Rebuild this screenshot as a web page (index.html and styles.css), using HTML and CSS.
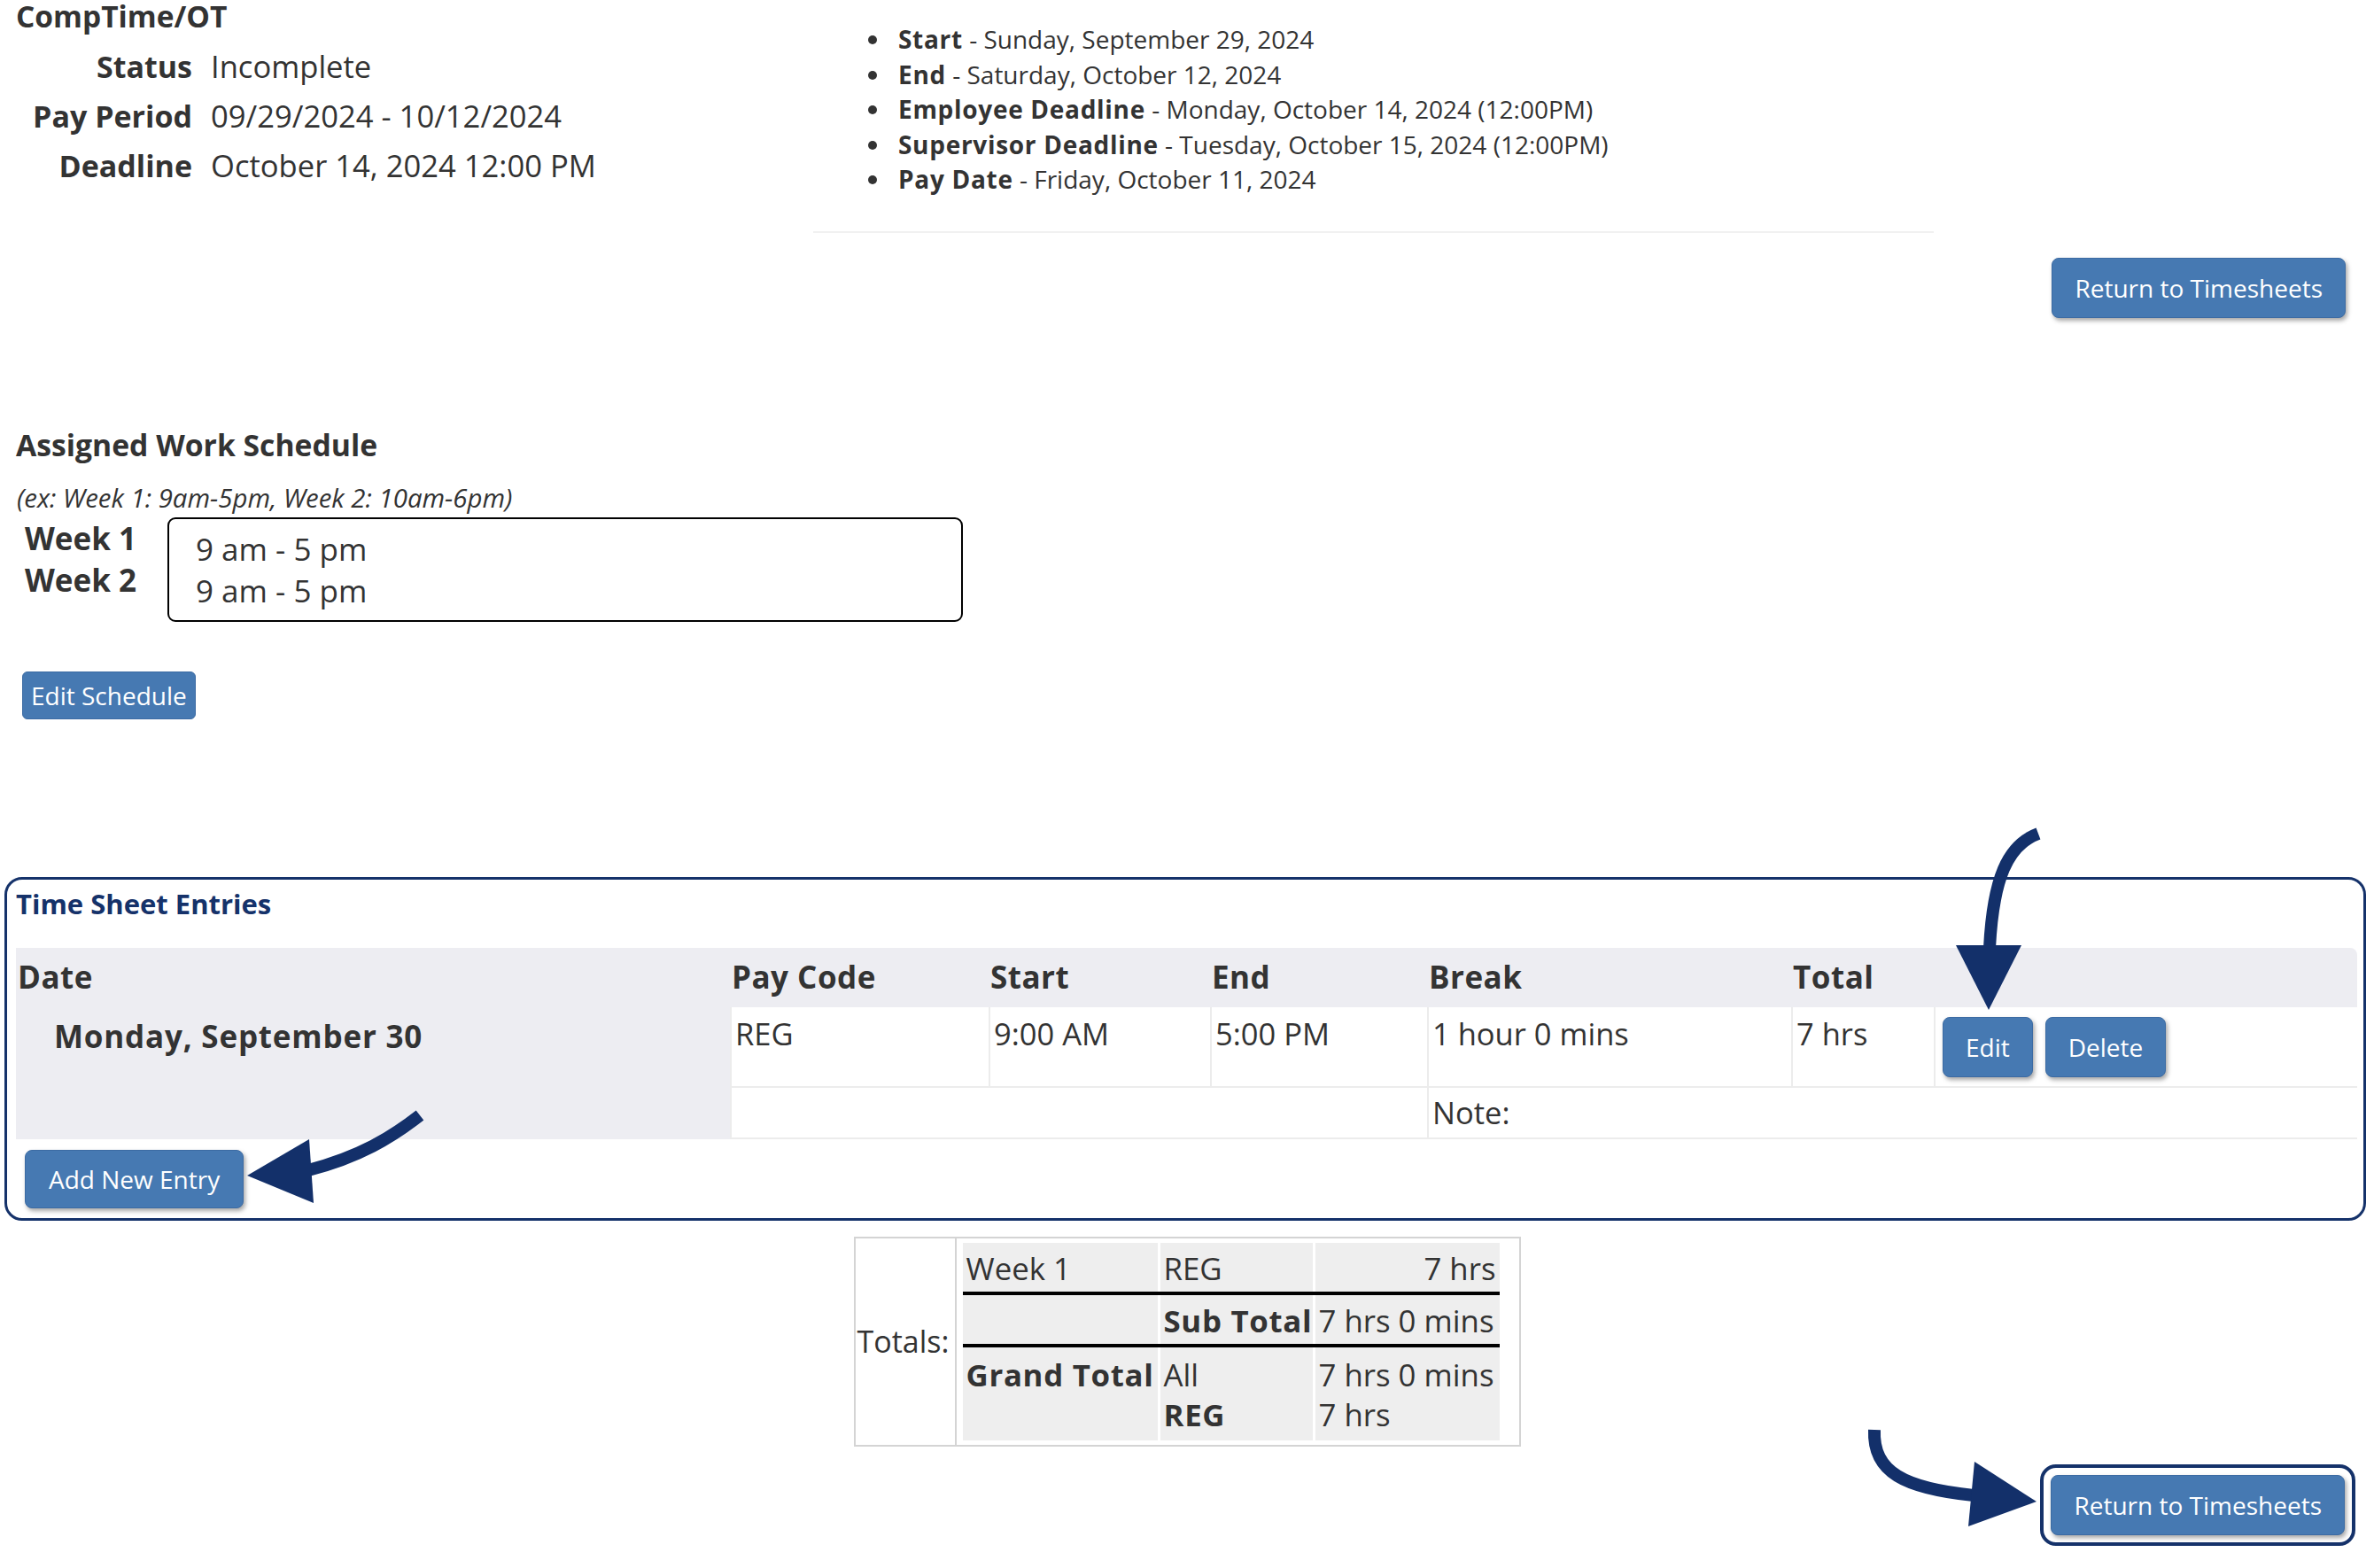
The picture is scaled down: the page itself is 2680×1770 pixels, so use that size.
FILE: index.html
```html
<!DOCTYPE html>
<html lang="en">
<head>
    <meta charset="UTF-8">
    <meta name="viewport" content="width=device-width, initial-scale=1.0">
    <title>CompTime/OT Timesheet</title>
    <link rel="stylesheet" href="styles.css">
</head>
<body>
    <div class="top">
        <div class="info">
            <h2 class="sheet-type">CompTime/OT</h2>
            <div class="info-grid">
                <span class="label">Status</span><span>Incomplete</span>
                <span class="label">Pay Period</span><span>09/29/2024 - 10/12/2024</span>
                <span class="label">Deadline</span><span>October 14, 2024 12:00 PM</span>
            </div>
        </div>
        <div class="period">
            <ul>
                <li><strong>Start</strong> - Sunday, September 29, 2024</li>
                <li><strong>End</strong> - Saturday, October 12, 2024</li>
                <li><strong>Employee Deadline</strong> - Monday, October 14, 2024 (12:00PM)</li>
                <li><strong>Supervisor Deadline</strong> - Tuesday, October 15, 2024 (12:00PM)</li>
                <li><strong>Pay Date</strong> - Friday, October 11, 2024</li>
            </ul>
        </div>
    </div>

    <div class="top-actions">
        <button class="btn">Return to Timesheets</button>
    </div>

    <section class="schedule">
        <h3>Assigned Work Schedule</h3>
        <p class="schedule-hint">(ex: Week 1: 9am-5pm, Week 2: 10am-6pm)</p>
        <div class="weeks">
            <div class="week-labels">
                <div>Week 1</div>
                <div>Week 2</div>
            </div>
            <div class="week-box">
                <div>9 am - 5 pm</div>
                <div>9 am - 5 pm</div>
            </div>
        </div>
        <button class="btn btn-small">Edit Schedule</button>
    </section>

    <section class="entries">
        <h3 class="entries-title">Time Sheet Entries</h3>
        <table class="entries-table">
            <colgroup>
                <col style="width: 806px">
                <col style="width: 292px">
                <col style="width: 250px">
                <col style="width: 245px">
                <col style="width: 411px">
                <col style="width: 161px">
                <col style="width: 478px">
            </colgroup>
            <thead>
                <tr>
                    <th>Date</th>
                    <th>Pay Code</th>
                    <th>Start</th>
                    <th>End</th>
                    <th>Break</th>
                    <th>Total</th>
                    <th></th>
                </tr>
            </thead>
            <tbody>
                <tr>
                    <td class="day" rowspan="2">Monday, September 30</td>
                    <td>REG</td>
                    <td>9:00 AM</td>
                    <td>5:00 PM</td>
                    <td>1 hour 0 mins</td>
                    <td>7 hrs</td>
                    <td class="row-actions">
                        <div class="row-buttons">
                            <button class="btn">Edit</button>
                            <button class="btn">Delete</button>
                        </div>
                    </td>
                </tr>
                <tr class="note-row">
                    <td colspan="3"></td>
                    <td colspan="3">Note:</td>
                </tr>
            </tbody>
        </table>
        <button class="btn btn-add">Add New Entry</button>
    </section>

    <table class="totals">
        <tr>
            <td class="totals-label">Totals:</td>
            <td class="totals-body">
                <table class="totals-inner">
                    <colgroup>
                        <col style="width: 220px">
                        <col style="width: 172px">
                        <col style="width: 208px">
                    </colgroup>
                    <tr>
                        <td>Week 1</td>
                        <td>REG</td>
                        <td class="num">7 hrs</td>
                    </tr>
                    <tr class="rule"><td colspan="3"></td></tr>
                    <tr>
                        <td></td>
                        <td><strong>Sub Total</strong></td>
                        <td>7 hrs 0 mins</td>
                    </tr>
                    <tr class="rule"><td colspan="3"></td></tr>
                    <tr class="grand">
                        <td><strong>Grand Total</strong></td>
                        <td>All<br><strong>REG</strong></td>
                        <td>7 hrs 0 mins<br>7 hrs</td>
                    </tr>
                </table>
            </td>
        </tr>
    </table>

    <div class="bottom-actions">
        <div class="ring">
            <button class="btn">Return to Timesheets</button>
        </div>
    </div>

    <!-- setas de destaque por cima da página -->
    <svg class="arrows" width="2680" height="1770" viewBox="0 0 2680 1770">
        <g fill="none" stroke="#13306a" stroke-width="14">
            <path d="M2301 941 C2266 954 2250 992 2246 1070"/>
            <path d="M474 1259 C442 1284 406 1306 348 1321"/>
            <path d="M2116 1614 C2114 1662 2150 1680 2228 1688"/>
        </g>
        <g fill="#13306a">
            <polygon points="2208,1067 2282,1067 2245,1140"/>
            <polygon points="349,1286 354,1358 279,1327"/>
            <polygon points="2229,1650 2222,1723 2299,1695"/>
        </g>
    </svg>
</body>
</html>
```

FILE: styles.css
```css
body {
    margin: 0;
    font-family: "Open Sans", "Noto Sans", sans-serif;
    color: #333;
    background-color: #fff;
    position: relative;
    width: 2680px;
    min-height: 1770px;
    overflow: hidden;
}

/* Cabeçalho: tipo da folha + período */
.top {
    display: flex;
}

.info {
    width: 918px;
}

.sheet-type {
    margin: 0;
    padding-left: 18px;
    font-size: 33.5px;
    line-height: 36px;
    font-weight: 700;
}

.info-grid {
    display: grid;
    grid-template-columns: 217px auto;
    column-gap: 21px;
    margin-top: 11px;
    font-size: 34.6px;
    line-height: 56px;
}

.info-grid .label {
    text-align: right;
    font-weight: 700;
    font-size: 34px;
}

.period {
    width: 1265px;
    box-sizing: border-box;
    padding: 25px 0 38px 89px;
    border-bottom: 2px solid #f1f1f1;
}

.period ul {
    margin: 0;
    padding: 0;
    font-size: 28px;
    line-height: 39.5px;
}

.period li {
    padding-left: 7px;
}

.period strong {
    letter-spacing: 0.7px;
}

/* Botões */
.btn {
    font-family: "Open Sans", "Noto Sans", sans-serif;
    font-size: 28px;
    line-height: 40px;
    color: #fff;
    background-color: #4679b2;
    border: 1px solid #3c6ba3;
    border-radius: 8px;
    padding: 13px 25px;
    box-shadow: 2px 3px 5px rgba(0, 0, 0, 0.35);
    cursor: pointer;
}

.btn-small {
    padding: 6px 9px;
    border-radius: 6px;
    box-shadow: none;
}

.top-actions {
    display: flex;
    justify-content: flex-end;
    margin-top: 28px;
    padding-right: 32px;
}

/* Horário de trabalho */
.schedule {
    padding-left: 18px;
}

.schedule h3 {
    margin: 123px 0 0;
    font-size: 33.7px;
    line-height: 40px;
    font-weight: 700;
}

.schedule-hint {
    margin: 22px 0 0 1px;
    font-size: 29.4px;
    line-height: 36px;
    font-style: italic;
}

.weeks {
    display: flex;
    margin-top: 4px;
}

.week-labels {
    width: 171px;
    padding-left: 10px;
    box-sizing: border-box;
    font-size: 35px;
    line-height: 47px;
    font-weight: 700;
}

.week-box {
    width: 898px;
    box-sizing: border-box;
    border: 2px solid #000;
    border-radius: 9px;
    padding: 10px 30px;
    font-size: 35px;
    line-height: 47px;
}

.schedule .btn-small {
    margin: 56px 0 0 7px;
}

/* Lançamentos */
.entries {
    margin: 178px 0 0 5px;
    width: 2666px;
    box-sizing: border-box;
    border: 3px solid #15326a;
    border-radius: 20px;
    padding: 7px 7px 11px 10px;
}

.entries-title {
    margin: 0;
    font-size: 31px;
    line-height: 40px;
    font-weight: 700;
    color: #15326a;
}

.entries-table {
    margin-top: 30px;
    width: 2643px;
    table-layout: fixed;
    border-collapse: separate;
    border-spacing: 0;
    font-size: 34.5px;
    line-height: 46px;
}

.entries-table th {
    background-color: #ededf2;
    text-align: left;
    font-size: 35px;
    font-weight: 700;
    letter-spacing: 0.5px;
    padding: 10px 2px 11px;
}

.entries-table th:last-child {
    border-top-right-radius: 8px;
}

.entries-table td {
    vertical-align: top;
    padding: 7px 4px 4px;
    border-left: 2px solid #ececec;
    border-bottom: 2px solid #ececec;
}

.entries-table td.day {
    background-color: #ededf2;
    border: none;
    padding: 10px 43px;
    font-size: 35px;
    font-weight: 700;
    letter-spacing: 0.8px;
}

.entries-table .note-row td {
    padding-top: 5px;
    padding-bottom: 5px;
}

.row-buttons {
    display: flex;
    gap: 14px;
    margin: 4px 0 6px 4px;
}

.btn-add {
    margin: 12px 0 0 10px;
    padding: 12px 26px;
}

/* Totais */
.totals {
    margin: 18px auto 0;
    border: 2px solid #d4d4d4;
    border-collapse: collapse;
    font-size: 34.8px;
    line-height: 45px;
}

.totals strong {
    letter-spacing: 0.7px;
}

.totals-label {
    width: 108px;
    padding: 0 2px;
    font-size: 34px;
    vertical-align: middle;
}

.totals-body {
    border-left: 2px solid #d4d4d4;
    padding: 5px 19px 5px 4px;
}

.totals-inner {
    width: 612px;
    table-layout: fixed;
    border-collapse: separate;
    border-spacing: 3px 0;
}

.totals-inner td {
    background-color: #eee;
    padding: 6px 4px 4px;
    vertical-align: top;
    white-space: nowrap;
}

.totals-inner td.num {
    text-align: right;
}

.totals-inner .rule td {
    background-color: #000;
    height: 4px;
    padding: 0;
}

.totals-inner .grand td {
    padding-top: 8px;
    padding-bottom: 7px;
}

/* Botão final destacado */
.bottom-actions {
    display: flex;
    justify-content: flex-end;
    margin-top: 20px;
    padding-right: 21px;
}

.ring {
    border: 4px solid #15326a;
    border-radius: 18px;
    padding: 8px;
    display: flex;
}

.arrows {
    position: absolute;
    top: 0;
    left: 0;
    pointer-events: none;
}
```
